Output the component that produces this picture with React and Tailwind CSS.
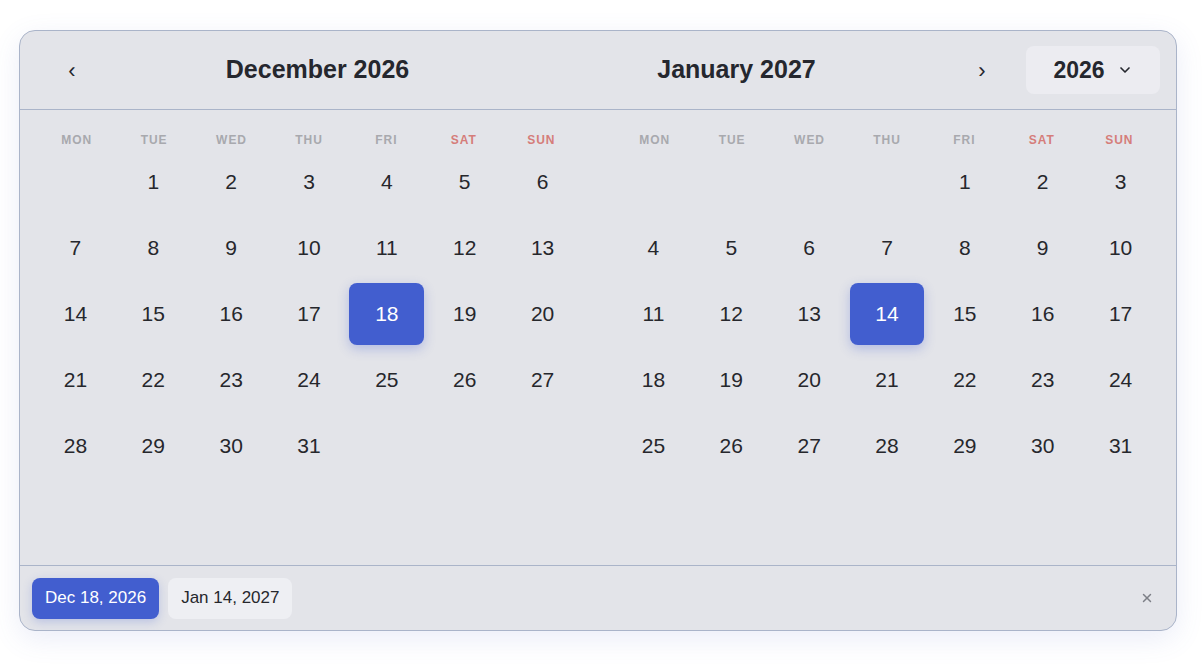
import { ChevronDown, X } from 'lucide-react'

const weekdays = ['MON', 'TUE', 'WED', 'THU', 'FRI', 'SAT', 'SUN']

function buildCells(offset, days) {
  const cells = []
  for (let i = 0; i < 42; i++) {
    const d = i - offset + 1
    cells.push(d >= 1 && d <= days ? d : null)
  }
  return cells
}

function MonthGrid({ offset, days, selected }) {
  const cells = buildCells(offset, days)

  return (
    <div className="flex-1">
      <div className="grid h-5 grid-cols-7 items-center">
        {weekdays.map((w, i) => (
          <div
            key={w}
            className={`text-center text-[12px] font-semibold tracking-[0.08em] ${
              i >= 5 ? 'text-[#d57d7a]' : 'text-[#a8a9ae]'
            }`}
          >
            {w}
          </div>
        ))}
      </div>

      <div className="mt-px grid grid-cols-7 gap-x-[3px] gap-y-[4px]">
        {cells.map((d, i) => (
          <div
            key={i}
            className={`flex h-[62px] items-center justify-center rounded-lg pb-px text-[21px] ${
              d === selected
                ? 'bg-[#425ecf] text-white shadow-[0_4px_12px_rgba(66,94,207,0.3)]'
                : 'text-[#26272c]'
            }`}
          >
            {d}
          </div>
        ))}
      </div>
    </div>
  )
}

function App() {
  return (
    <div className="min-h-screen bg-white px-[19px] pt-[30px] font-['Liberation_Sans',Arial,sans-serif]">
      <div className="h-[601px] w-[1158px] overflow-hidden rounded-2xl border-[1.5px] border-[#aab4c9] bg-[#e3e4e9] shadow-[0_8px_28px_rgba(90,110,200,0.12)]">
        <div className="flex h-[79px] items-center border-b-[1.5px] border-[#aab4c9] px-4">
          <button className="flex h-10 w-[72px] items-center justify-center text-[22px] text-[#25272e]">
            ‹
          </button>
          <h2 className="flex-1 text-center text-[25px] font-bold text-[#25272e]">
            December 2026
          </h2>
          <h2 className="flex-1 text-center text-[25px] font-bold text-[#25272e]">
            January 2027
          </h2>
          <button className="flex h-10 w-[72px] items-center justify-center text-[22px] text-[#25272e]">
            ›
          </button>
          <button className="ml-2 flex h-12 w-[134px] items-center justify-center gap-3 rounded-lg bg-[#ececf1] text-[23px] font-bold text-[#25272e]">
            2026
            <ChevronDown size={16} strokeWidth={2.5} />
          </button>
        </div>

        <div className="flex h-[455px] gap-9 px-[18px] pt-5">
          <MonthGrid offset={1} days={31} selected={18} />
          <MonthGrid offset={4} days={31} selected={14} />
        </div>

        <div className="flex h-[65px] items-center gap-[9px] border-t-[1.5px] border-[#aab4c9] px-3">
          <span className="flex h-[41px] items-center rounded-lg bg-[#425ecf] px-[13px] text-[17px] text-white shadow-[0_3px_10px_rgba(66,94,207,0.25)]">
            Dec 18, 2026
          </span>
          <span className="flex h-[41px] items-center rounded-lg bg-[#eeeff3] px-[13px] text-[17px] text-[#26272c]">
            Jan 14, 2027
          </span>
          <button className="ml-auto mr-[10px] text-[#7d7f87]">
            <X size={14} strokeWidth={2.5} />
          </button>
        </div>
      </div>
    </div>
  )
}

export default App
